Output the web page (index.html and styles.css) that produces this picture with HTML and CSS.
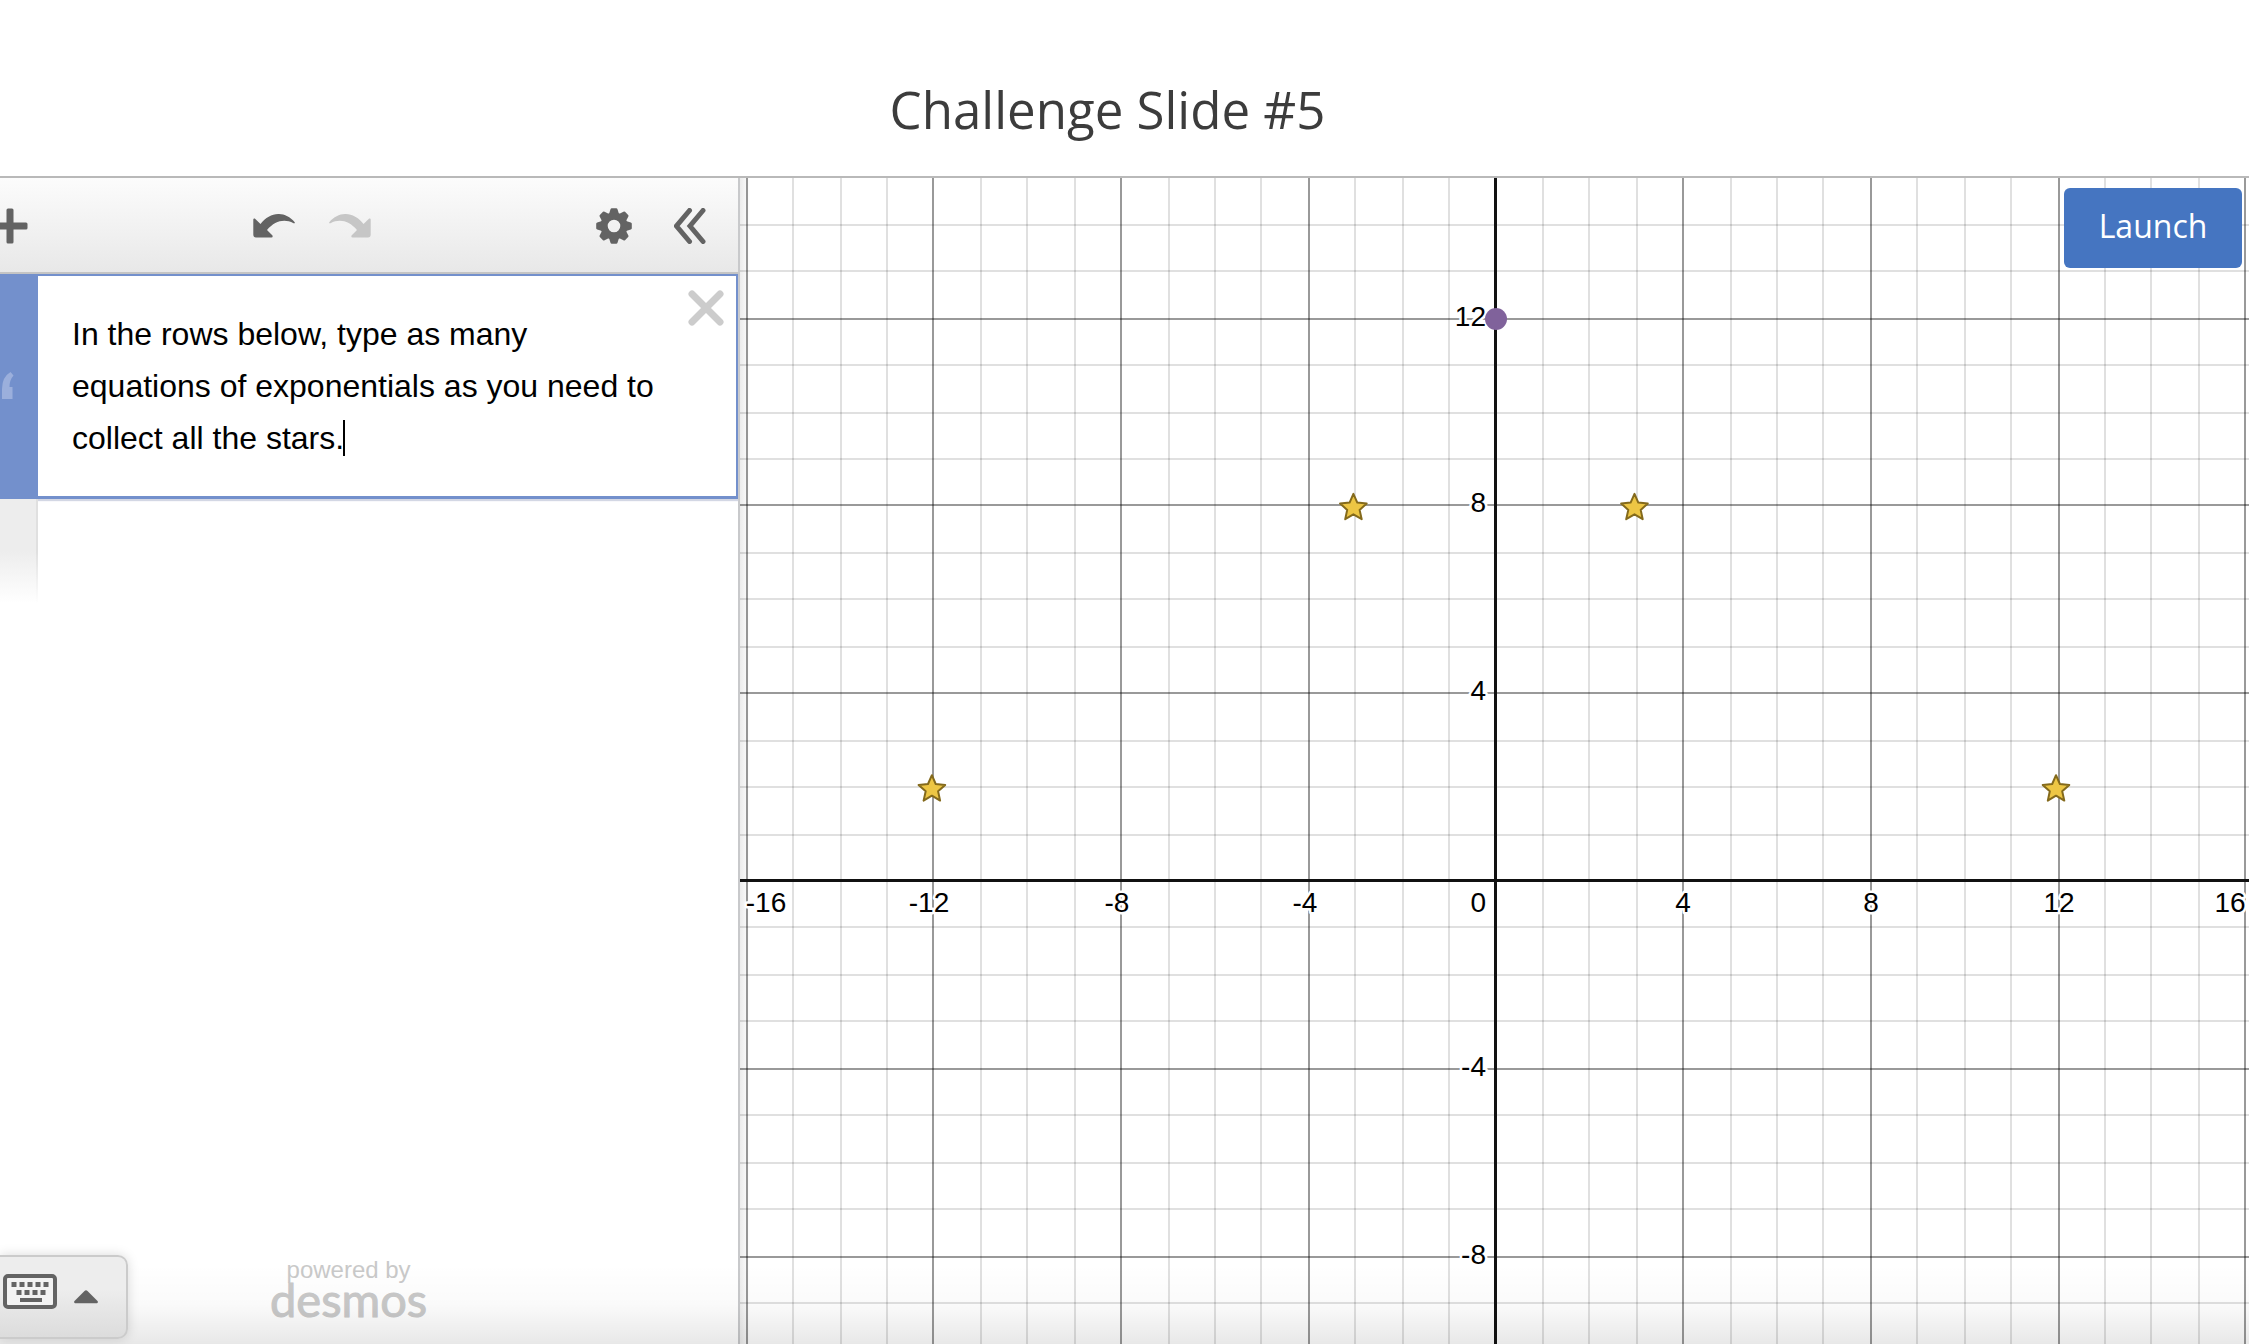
FILE: index.html
```html
<!DOCTYPE html>
<html lang="en">
<head>
  <meta charset="utf-8">
  <meta name="viewport" content="width=device-width, initial-scale=1">
  <title>Challenge Slide #5</title>
  <link rel="stylesheet" href="styles.css">
</head>
<body>
  <header class="slide-header">
    <h1 class="slide-title">Challenge Slide #5</h1>
  </header>

  <main class="calculator">
    <section class="panel" aria-label="Expressions">
      <div class="toolbar">
        <button class="tool" type="button" aria-label="Add item">
          <svg width="36" height="36" viewBox="0 0 36 36"><path class="ink" d="M16 .5h4q1.500 0 1.500 1.500v12.500H34q1.500 0 1.500 1.500v4q0 1.500-1.500 1.500H21.500V34q0 1.500-1.500 1.500h-4q-1.500 0-1.500-1.500V21.500H2Q.5 21.500.5 20v-4q0-1.500 1.500-1.500h12.500V2Q14.500.5 16 .5z"/></svg>
        </button>
        <div class="tool-group">
          <button class="tool" type="button" aria-label="Undo">
            <svg width="42" height="24" viewBox="0 0 42 24"><path class="ink" d="M1.800 4.500 7.500 10C17-2.500 32-3.500 41.700 8.200q.6 1.600-1.200 1C31 4.500 22 7 14 16l5.500 5.600q.6 1.600-1 1.900H3Q.3 23.500.3 20.500V5.500q.2-1.500 1.500-1z"/></svg>
          </button>
          <button class="tool" type="button" aria-label="Redo" disabled>
            <svg width="42" height="24" viewBox="0 0 42 24"><path class="ink" d="M40.200 4.500 34.500 10C25-2.500 10-3.500.3 8.200q-.6 1.600 1.200 1C11 4.500 20 7 28 16l-5.500 5.600q-.6 1.600 1 1.900H39q2.700 0 2.700-3V5.500q-.2-1.500-1.500-1z"/></svg>
          </button>
        </div>
        <div class="tool-group">
          <button class="tool" type="button" aria-label="Graph settings">
            <svg width="36" height="36" viewBox="-18 -18 36 36">
              <g class="ink">
                <path fill-rule="evenodd" d="M0-13.500A13.500 13.500 0 1 1 0 13.500A13.500 13.500 0 1 1 0-13.500zM0-6.300A6.300 6.300 0 1 0 0 6.300A6.300 6.300 0 1 0 0-6.300z"/>
                <path id="tooth" d="M-5-12-3.500-16.800q.3-1 1.300-1h4.400q1 0 1.300 1L5-12z"/>
                <use href="#tooth" transform="rotate(45)"/><use href="#tooth" transform="rotate(90)"/>
                <use href="#tooth" transform="rotate(135)"/><use href="#tooth" transform="rotate(180)"/>
                <use href="#tooth" transform="rotate(225)"/><use href="#tooth" transform="rotate(270)"/>
                <use href="#tooth" transform="rotate(315)"/>
              </g>
            </svg>
          </button>
          <button class="tool" type="button" aria-label="Hide expression list">
            <svg width="32" height="36" viewBox="0 0 32 36"><path class="line" d="M15.500 2.500 2.500 18l13 15.500M29 2.500 16 18l13 15.500"/></svg>
          </button>
        </div>
      </div>

      <div class="note">
        <div class="note-tab">
          <svg width="14" height="28" viewBox="0 0 14 28"><path d="M10.500 0 13.500 3.500Q9.500 8 9.500 15H12.500V27H2V17Q2 5 10.500 0z"/></svg>
        </div>
        <div class="note-body">
          <textarea class="note-text" aria-label="Note" rows="3" spellcheck="false">In the rows below, type as many equations of exponentials as you need to collect all the stars.</textarea>
          <span class="caret"></span>
        </div>
        <button class="note-close" type="button" aria-label="Delete note">
          <svg width="36" height="36" viewBox="0 0 36 36"><path d="M4 4 32 32M32 4 4 32"/></svg>
        </button>
      </div>
      <div class="next-row"></div>

      <footer class="panel-footer">
        <button class="keypad" type="button" aria-label="Open keypad">
          <svg width="54" height="36" viewBox="0 0 54 36">
            <rect class="key-frame" x="2" y="2" width="50" height="31" rx="3"/>
            <path class="ink" d="M8.500 8h5v5h-5zm8 0h5v5h-5zm8 0h5v5h-5zm8 0h5v5h-5zm8 0h5v5h-5zM13.500 16h5v5h-5zm8 0h5v5h-5zm8 0h5v5h-5zm8 0h5v5h-5zM17 24h22v4H17z"/>
          </svg>
          <svg width="24" height="14" viewBox="0 0 24 14"><path class="ink" d="M10.500 1q1.500-1.400 3 0l10 10q1 1.500-.5 2.300H1Q-.5 12.500.5 11z"/></svg>
        </button>
        <div class="brand">
          <span class="brand-lead">powered by</span>
          <span class="brand-name">desmos</span>
        </div>
      </footer>
    </section>

    <section class="graph" aria-label="Graph">
      <svg class="plot" id="plot" role="img" aria-label="Coordinate plane with four stars and a point at (0, 12)"></svg>
      <button class="launch" type="button">Launch</button>
    </section>
  </main>
  <script src="graph.js"></script>
</body>
</html>
```
FILE: styles.css
```css
* {
  box-sizing: border-box;
}

body {
  margin: 0;
  min-height: 100vh;
  display: flex;
  flex-direction: column;
  background: #fff;
  font-family: "Liberation Sans", Arial, sans-serif;
  color: #000;
}

button {
  padding: 0;
  border: 0;
  background: none;
  font: inherit;
  cursor: pointer;
}

svg {
  display: block;
}

.slide-header {
  height: 176px;
  padding: 73px 34px 0 0;
  text-align: center;
}

.slide-title {
  margin: 0;
  font: 500 51px/72px "Open Sans", sans-serif;
  color: #3c3c3c;
}

.calculator {
  position: relative;
  flex: 1;
  display: grid;
  grid-template-columns: 740px 1fr;
  border-top: 2px solid #b9b9b9;
}

/* Soft shade along the bottom edge, over the panel and the graph */
.calculator::after {
  content: "";
  position: absolute;
  inset: auto 0 0 0;
  height: 80px;
  background: linear-gradient(rgba(0, 0, 0, 0), rgba(0, 0, 0, 0.02) 50%, rgba(0, 0, 0, 0.09));
  pointer-events: none;
}

.panel {
  display: flex;
  flex-direction: column;
  border-right: 2px solid #c8c9cb;
}

.toolbar {
  height: 96px;
  display: flex;
  align-items: center;
  justify-content: space-between;
  margin-left: -8px;
  padding: 2px 32px 0 0;
  border-bottom: 2px solid #c4c4c4;
  background: linear-gradient(#fcfcfc, #e8e8e8);
}

.tool-group {
  display: flex;
  align-items: center;
  gap: 34px;
}

.tool-group:last-child {
  gap: 42px;
}

.ink {
  fill: #636363;
}

.tool:disabled .ink {
  fill: #c6c6c6;
}

.line {
  fill: none;
  stroke: #636363;
  stroke-width: 5;
  stroke-linecap: round;
}

.note {
  display: flex;
  border: 2px solid #7390cc;
  border-left: 0;
  border-bottom-width: 3px;
  box-shadow: 0 2px 1px #d3d7e4;
}

.note-tab {
  width: 38px;
  display: flex;
  align-items: center;
  background: #7390cc;
}

.note-tab path {
  fill: #9bafdc;
}

.note-body {
  position: relative;
  flex: 1;
  padding: 32px 30px 32px 34px;
}

.note-text {
  display: block;
  width: 100%;
  padding: 0;
  border: 0;
  outline: 0;
  resize: none;
  overflow: hidden;
  background: none;
  font: 32px/52px "Liberation Sans", Arial, sans-serif;
  color: #000;
}

.caret {
  position: absolute;
  left: 305px;
  top: 144px;
  width: 2px;
  height: 36px;
  background: #000;
}

.note-close {
  align-self: flex-start;
  margin: 14px 12px 0 0;
}

.note-close path {
  stroke: #ccc;
  stroke-width: 7;
  stroke-linecap: round;
}

.next-row {
  width: 38px;
  height: 104px;
  border: 0 solid #e4e4e4;
  border-right-width: 2px;
  border-image: linear-gradient(#e0e0e0 50%, #fff) 1;
  background: linear-gradient(#ededed 50%, #fff);
}

.panel-footer {
  height: 94px;
  display: flex;
  align-items: flex-start;
  gap: 142px;
  margin-top: auto;
  padding-top: 5px;
}

.keypad {
  position: relative;
  z-index: 1;
  width: 128px;
  height: 84px;
  display: flex;
  align-items: center;
  gap: 17px;
  padding: 0 0 10px 3px;
  border: 2px solid #cbcbcb;
  border-left: 0;
  border-radius: 0 10px 10px 0;
  background: linear-gradient(#ededed 40%, #dcdcdc);
  box-shadow: 0 0 12px rgba(0, 0, 0, 0.15);
}

.keypad svg:last-child {
  margin-top: 10px;
}

.key-frame {
  fill: #f2f2f2;
  stroke: #636363;
  stroke-width: 4;
}

.brand {
  display: flex;
  flex-direction: column;
  align-items: center;
  padding-top: 1px;
  color: #c9c9c9;
}

.brand-lead {
  font-size: 24px;
  line-height: 28px;
}

.brand-name {
  font: 400 47px/30px Lato, sans-serif;
  -webkit-text-stroke: 1px #c9c9c9;
}

.graph {
  position: relative;
  background: linear-gradient(90deg, #ececec, #fff 10px);
}

.plot {
  position: absolute;
  inset: 0;
  width: 100%;
  height: 100%;
}

.minor {
  fill: rgba(0, 0, 0, 0.12);
}

.major {
  fill: rgba(0, 0, 0, 0.4);
}

.axis {
  fill: #111;
}

.label {
  font-size: 28px;
  fill: #000;
  stroke: #fff;
  stroke-width: 5;
  stroke-linejoin: round;
  paint-order: stroke;
}

.star {
  fill: #edc644;
  stroke: #846a1c;
  stroke-width: 2;
  stroke-linejoin: round;
}

.point {
  fill: #80629b;
}

.launch {
  position: absolute;
  top: 10px;
  right: 7px;
  width: 178px;
  height: 80px;
  padding-bottom: 4px;
  border-radius: 6px;
  background: #4575c1;
  color: #fff;
  font: 32px/44px "Open Sans", sans-serif;
}
```
FILE: graph.js
```js
const NS = 'http://www.w3.org/2000/svg';
const UNIT_X = 46.84;
const UNIT_Y = 46.9;
const STARS = [[-12, 2], [-3, 8], [3, 8], [12, 2]];
const POINT = [0, 12];
const plot = document.getElementById('plot');

function add(tag, attrs, text) {
  const el = document.createElementNS(NS, tag);
  for (const key in attrs) el.setAttribute(key, attrs[key]);
  if (text !== undefined) el.textContent = text;
  plot.appendChild(el);
}

// Grid lines are two pixels thick and sit on even pixels.
const snap = (v) => 2 * Math.round(v / 2);

function draw() {
  plot.replaceChildren();
  const w = plot.clientWidth;
  const h = plot.clientHeight;
  const ox = w / 2 + 0.45;
  const oy = h * 0.6021;
  const xMin = Math.ceil(-ox / UNIT_X);
  const xMax = Math.floor((w - ox) / UNIT_X);
  const yMin = Math.ceil((oy - h) / UNIT_Y);
  const yMax = Math.floor(oy / UNIT_Y);

  for (let k = xMin; k <= xMax; k++) {
    if (k) add('rect', { class: k % 4 ? 'minor' : 'major', x: snap(ox + k * UNIT_X), y: 0, width: 2, height: h });
  }
  for (let k = yMin; k <= yMax; k++) {
    if (k) add('rect', { class: k % 4 ? 'minor' : 'major', x: 0, y: snap(oy - k * UNIT_Y), width: w, height: 2 });
  }
  const ax = snap(ox);
  const ay = snap(oy);
  add('rect', { class: 'axis', x: 0, y: ay - 1, width: w, height: 3 });
  add('rect', { class: 'axis', x: ax, y: 0, width: 3, height: h });

  for (let k = xMin; k <= xMax; k++) {
    if (k % 4 || !k) continue;
    let x = snap(ox + k * UNIT_X) + (k < 0 ? -3 : 1);
    const half = String(k).length * 8 - (k < 0 ? 3 : 0);
    x = Math.max(half + 5, Math.min(w - half - 3, x));
    add('text', { class: 'label', x, y: ay + 32, 'text-anchor': 'middle' }, k);
  }
  for (let k = yMin; k <= yMax; k++) {
    if (k % 4 || !k) continue;
    add('text', { class: 'label', x: ax - 8, y: snap(oy - k * UNIT_Y) + 8, 'text-anchor': 'end' }, k);
  }
  add('text', { class: 'label', x: ax - 8, y: ay + 32, 'text-anchor': 'end' }, 0);

  for (const [sx, sy] of STARS) {
    const pts = [];
    for (let i = 0; i < 10; i++) {
      const r = i % 2 ? 6.5 : 14;
      const a = (i * Math.PI) / 5;
      pts.push((ox + sx * UNIT_X - 1 + r * Math.sin(a)).toFixed(1) + ',' + (oy - sy * UNIT_Y + 3 - r * Math.cos(a)).toFixed(1));
    }
    add('polygon', { class: 'star', points: pts.join(' ') });
  }
  add('circle', { class: 'point', cx: ax + 2, cy: snap(oy - POINT[1] * UNIT_Y) + 1, r: 11 });
}

draw();
window.addEventListener('resize', draw);
```
